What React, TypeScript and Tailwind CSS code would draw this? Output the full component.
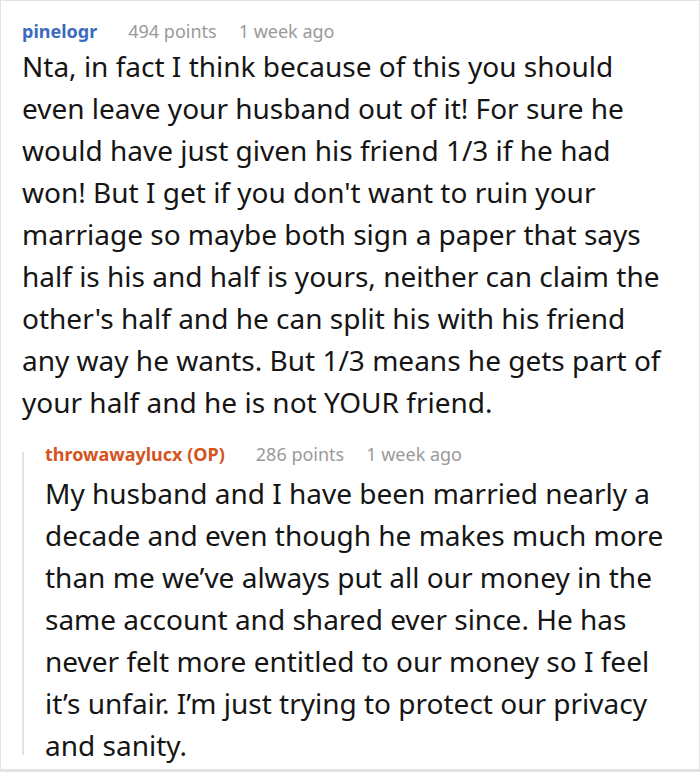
import React from "react";

function Meta({ name, color, points }: { name: string; color: string; points: string }) {
  return (
    <div className="flex items-baseline text-[18px] leading-[28px] whitespace-nowrap">
      <span className={`font-bold ${color}`}>{name}</span>
      <span className="ml-[31px] text-[#9a9a9a]">{points}</span>
      <span className="ml-[22px] text-[#9a9a9a]">1 week ago</span>
    </div>
  );
}

export default function App() {
  return (
    <div
      className="w-[700px] h-[772px] bg-white border border-[#e3e3e3] border-b-[3px] overflow-hidden"
      style={{ fontFamily: '"Noto Sans", "Open Sans", sans-serif' }}
    >
      <div className="pl-[21px] pr-3 pt-[16px]">
        <Meta name="pinelogr" color="text-[#3a6bbf]" points="494 points" />
        <p className="mr-[24px] text-[28px] leading-[42px] text-[#151515]">
          Nta, in fact I think because of this you should even leave your husband out of it! For sure he would have just given his friend 1/3 if he had won! But I get if you don't want to ruin your marriage so maybe both sign a paper that says half is his and half is yours, neither can claim the other's half and he can split his with his friend any way he wants. But 1/3 means he gets part of your half and he is not YOUR friend.
        </p>
        <div className="mt-[17px] flex">
          <div className="w-[2px] bg-[#e2e2e2] mt-[12px] mb-[11px] shrink-0" />
          <div className="pl-[21px] min-w-0">
            <Meta name="throwawaylucx (OP)" color="text-[#d4531f]" points="286 points" />
            <p className="mt-[4px] text-[28px] leading-[42px] text-[#151515]">
              My husband and I have been married nearly a decade and even though he makes much more than me we’ve always put all our money in the same account and shared ever since. He has never felt more entitled to our money so I feel it’s unfair. I’m just trying to protect our privacy and sanity.
            </p>
          </div>
        </div>
      </div>
    </div>
  );
}
